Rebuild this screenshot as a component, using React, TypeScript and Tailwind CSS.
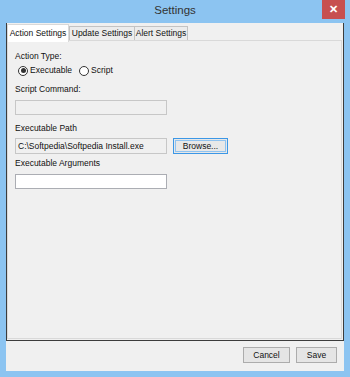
import React from 'react'

const font = { fontFamily: '"Liberation Sans", Arial, sans-serif' }

function Radio({ checked, label }: { checked?: boolean; label: string }) {
  return (
    <div className="flex items-center">
      <span className="w-[10px] h-[10px] rounded-full border border-[#333] bg-white flex items-center justify-center">
        {checked && <span className="w-[5px] h-[5px] rounded-full bg-[#333]" />}
      </span>
      <span className="ml-[2px]">{label}</span>
    </div>
  )
}

export default function App() {
  return (
    <div className="w-[350px] h-[377px] bg-[#8cc4f1] flex flex-col text-[8.5px] leading-[11px] text-[#111]" style={font}>
      {/* title bar */}
      <div className="relative h-[23px] flex items-center justify-center">
        <span className="text-[11.5px] text-[#333] -mt-[2px]">Settings</span>
        <div className="absolute right-[5px] top-0 w-[23px] h-[19px] bg-[#c75050] flex items-center justify-center text-white text-[11px] font-bold">✕</div>
      </div>

      {/* client */}
      <div className="mx-[6px] h-[348px] bg-[#f0f0f0] flex flex-col">
        <div className="h-[318px] border-x border-b border-[#3c3c3c] flex flex-col">
          {/* tabs */}
          <div className="h-[18px] flex items-start">
            <div className="relative z-10 mt-[1px] w-[62px] h-[18px] bg-white border border-b-0 border-[#d9d9d9] flex items-center justify-center">Action Settings</div>
            <div className="mt-[3px] w-[66px] h-[15px] bg-[#ececec] border border-[#c3c3c3] flex items-center justify-center">Update Settings</div>
            <div className="mt-[3px] -ml-px w-[54px] h-[15px] bg-[#ececec] border border-[#c3c3c3] flex items-center justify-center">Alert Settings</div>
          </div>

          {/* panel */}
          <div className="flex-1 -mt-px mr-px mb-px border border-[#d9d9d9] bg-[#f0f0f0] pl-[7px] pt-[10px] flex flex-col">
            <div>Action Type:</div>
            <div className="mt-[3px] ml-[3px] flex gap-[7px]">
              <Radio checked label="Executable" />
              <Radio label="Script" />
            </div>
            <div className="mt-[8px]">Script Command:</div>
            <div className="mt-[5px] w-[152px] h-[15px] border border-[#c7c7c7] bg-[#f0f0f0]" />
            <div className="mt-[8px]">Executable Path</div>
            <div className="mt-[4px] flex items-center">
              <div className="w-[152px] h-[16px] border border-[#c7c7c7] bg-[#f0f0f0] flex items-center pl-[2px]">C:\Softpedia\Softpedia Install.exe</div>
              <div className="ml-[6px] w-[55px] h-[16px] border border-[#3c97e6] bg-[#e8e8e8] flex items-center justify-center">
                <span className="w-[51px] h-[12px] flex items-center justify-center border border-[#8fc3f0]">Browse...</span>
              </div>
            </div>
            <div className="mt-[4px]">Executable Arguments</div>
            <div className="mt-[5px] w-[152px] h-[15px] border border-[#abadb3] bg-white" />
          </div>
        </div>

        {/* footer buttons */}
        <div className="mt-[6px] pr-[7px] flex justify-end gap-[6px]">
          <div className="w-[47px] h-[16px] border border-[#acacac] bg-[#e5e5e5] flex items-center justify-center">Cancel</div>
          <div className="w-[41px] h-[16px] border border-[#acacac] bg-[#e5e5e5] flex items-center justify-center">Save</div>
        </div>
      </div>
    </div>
  )
}
